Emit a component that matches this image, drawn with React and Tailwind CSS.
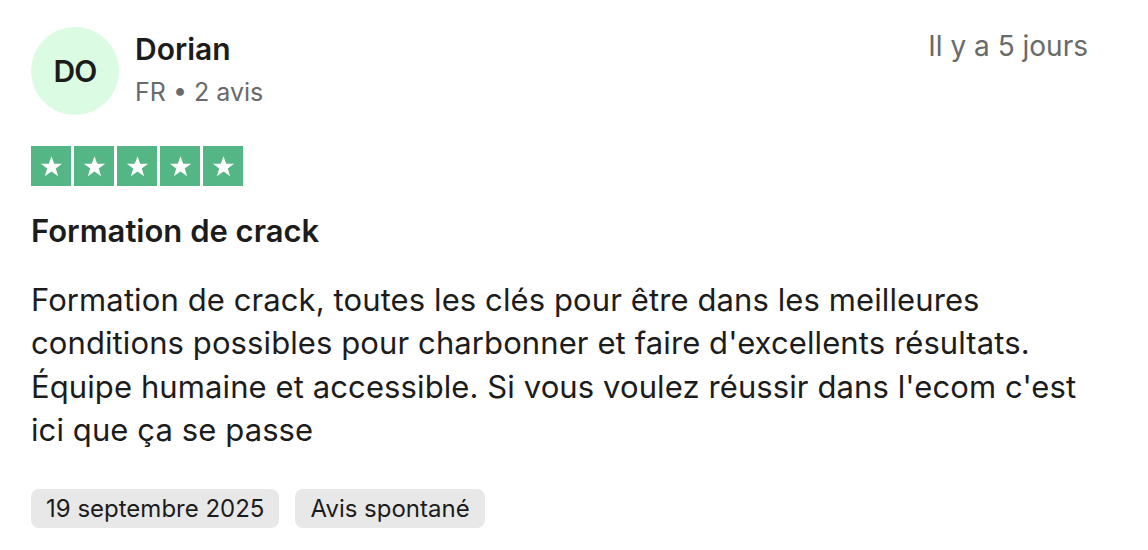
import React from 'react';

function Star() {
  return (
    <div className="w-[40px] h-[40px] bg-[#54b685] flex items-center justify-center">
      <svg viewBox="0 0 24 24" className="w-[25px] h-[25px]" fill="white">
        <path d="M12 2.2l2.6 7.2h7.6l-6.1 4.5 2.3 7.4L12 16.8l-6.4 4.5 2.3-7.4-6.1-4.5h7.6z" />
      </svg>
    </div>
  );
}

export default function App() {
  return (
    <div className="w-[1148px] h-[550px] bg-white text-[#1c1c1c] pl-[31px] pr-[60px] pt-[27px]" style={{ fontFamily: 'Inter, "Noto Sans", sans-serif' }}>
      <div className="flex justify-between items-start">
        <div className="flex items-center">
          <div className="w-[88px] h-[88px] rounded-full bg-[#dcfbe3] flex items-center justify-center text-[30px] font-semibold tracking-tight">
            DO
          </div>
          <div className="ml-[16px] -mt-[2px]">
            <div className="text-[30px] font-semibold leading-[36px]">Dorian</div>
            <div className="text-[25px] text-[#696a6a] leading-[34px] mt-[8px]">FR • 2 avis</div>
          </div>
        </div>
        <div className="text-[28px] text-[#696a6a] leading-[36px] mt-[1px]">Il y a 5 jours</div>
      </div>

      <div className="flex gap-[3px] mt-[31px]">
        <Star />
        <Star />
        <Star />
        <Star />
        <Star />
      </div>

      <div className="text-[31px] font-semibold mt-[26px] leading-[38px]">Formation de crack</div>

      <p className="text-[31px] tracking-[0.1px] leading-[43.3px] mt-[28px]">
        Formation de crack, toutes les clés pour être dans les meilleures conditions possibles pour charbonner et faire d'excellents résultats. Équipe humaine et accessible. Si vous voulez réussir dans l'ecom c'est ici que ça se passe
      </p>

      <div className="flex gap-[16px] mt-[38px]">
        <span className="h-[39px] px-[15px] rounded-[8px] bg-[#e8e8e8] text-[24px] flex items-center">19 septembre 2025</span>
        <span className="h-[39px] px-[15px] rounded-[8px] bg-[#e8e8e8] text-[24px] flex items-center">Avis spontané</span>
      </div>
    </div>
  );
}
